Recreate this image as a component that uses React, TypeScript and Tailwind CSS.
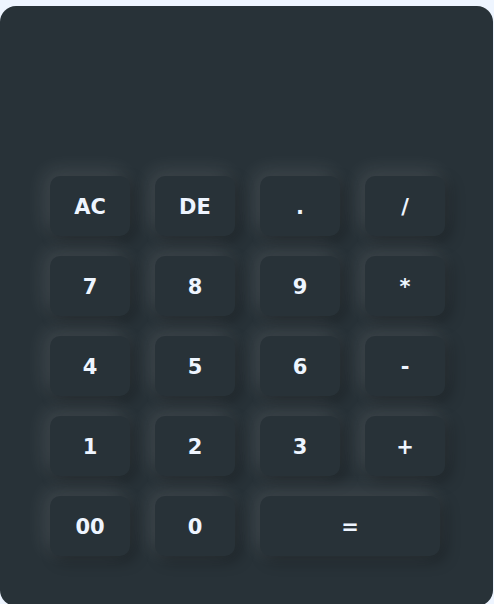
import React from "react";

const keys: { label: string; wide?: boolean }[] = [
  { label: "AC" },
  { label: "DE" },
  { label: "." },
  { label: "/" },
  { label: "7" },
  { label: "8" },
  { label: "9" },
  { label: "*" },
  { label: "4" },
  { label: "5" },
  { label: "6" },
  { label: "-" },
  { label: "1" },
  { label: "2" },
  { label: "3" },
  { label: "+" },
  { label: "00" },
  { label: "0" },
  { label: "=", wide: true },
];

export default function App() {
  return (
    <div className="h-[604px] w-[494px] overflow-hidden bg-[#eef5ff] pt-[6px] font-['DejaVu_Sans',sans-serif]">
      <div className="flex h-[600px] w-[493px] flex-col rounded-[16px] bg-[#283238] pl-[50px]">
        <div className="h-[170px]" />
        <div className="grid grid-cols-[repeat(4,80px)] gap-x-[25px] gap-y-[20px]">
          {keys.map((k) => (
            <button
              key={k.label}
              className={[
                "flex h-[60px] items-center justify-center rounded-[10px] bg-[#283238] pt-[4px] text-[21px] font-bold text-[#eef5ff]",
                "shadow-[-5px_-5px_20px_rgba(255,255,255,0.12),5px_5px_15px_rgba(0,0,0,0.3)]",
                k.wide ? "col-span-2 w-[180px]" : "w-[80px]",
              ].join(" ")}
            >
              {k.label}
            </button>
          ))}
        </div>
      </div>
    </div>
  );
}
